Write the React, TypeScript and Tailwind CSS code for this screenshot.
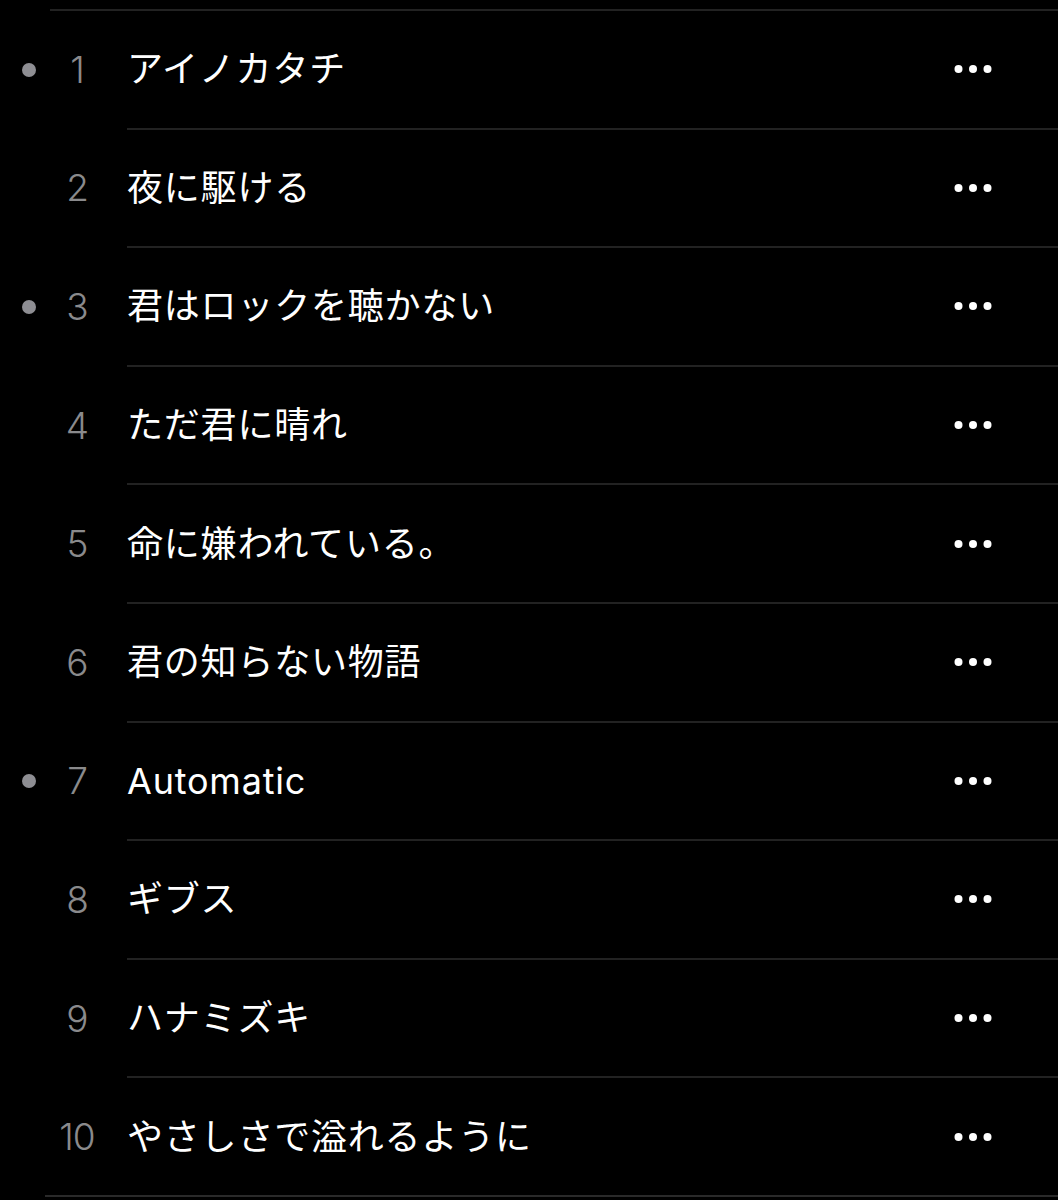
const tracks = [
  { n: 1, title: "アイノカタチ", dot: true },
  { n: 2, title: "夜に駆ける", dot: false },
  { n: 3, title: "君はロックを聴かない", dot: true },
  { n: 4, title: "ただ君に晴れ", dot: false },
  { n: 5, title: "命に嫌われている。", dot: false },
  { n: 6, title: "君の知らない物語", dot: false },
  { n: 7, title: "Automatic", dot: true },
  { n: 8, title: "ギブス", dot: false },
  { n: 9, title: "ハナミズキ", dot: false },
  { n: 10, title: "やさしさで溢れるように", dot: false },
];

function MoreIcon() {
  return (
    <svg width="40" height="10" viewBox="0 0 40 10" className="block">
      <circle cx="5.5" cy="5" r="4" fill="#fff" />
      <circle cx="20" cy="5" r="4" fill="#fff" />
      <circle cx="34.5" cy="5" r="4" fill="#fff" />
    </svg>
  );
}

export default function App() {
  return (
    <div
      className="min-h-[1200px] w-[1058px] bg-black pt-[9px]"
      style={{ fontFamily: 'Inter, "Noto Sans CJK JP", sans-serif' }}
    >
      <div className="ml-[50px] h-[2px] bg-[#222]" />
      {tracks.map((t, i) => (
        <div key={t.n} className="flex h-[118.6px] flex-col">
          <div className="flex flex-1 items-center">
            <div className="flex w-[58px] justify-center">
              {t.dot && <span className="mt-[1px] h-[14px] w-[14px] rounded-full bg-[#8e8e93]" />}
            </div>
            <div className="w-[38px] text-center text-[37px] font-light leading-none tracking-[-1px] text-[#8a8a8c]">
              {t.n}
            </div>
            <div className="ml-[31px] flex-1 text-[36px] leading-none tracking-[0.8px] text-white">
              {t.title}
            </div>
            <div className="mr-[65px]">
              <MoreIcon />
            </div>
          </div>
          <div
            className={
              i === tracks.length - 1
                ? "ml-[45px] h-[2px] bg-[#2a2a2a]"
                : "ml-[127px] h-[2px] bg-[#222]"
            }
          />
        </div>
      ))}
    </div>
  );
}
